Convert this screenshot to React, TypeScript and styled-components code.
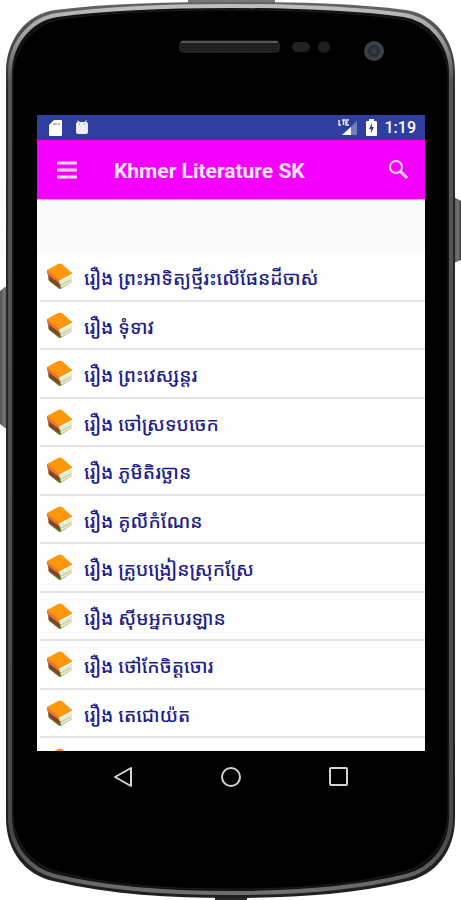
import React from 'react';
import styled, { createGlobalStyle } from 'styled-components';

const GlobalStyle = createGlobalStyle`
  * { box-sizing: border-box; }
  body { margin: 0; background: #fff; font-family: Roboto, "Noto Sans", sans-serif; }
`;

const Phone = styled.main`
  position: relative;
  min-height: 100vh;
  padding: 115px 36px 97px 37px;
  overflow: hidden;
`;

const Shell = styled.svg`
  position: absolute;
  inset: 0;
  width: 100%;
  height: 100%;
`;

const Screen = styled.div`
  position: relative;
  display: flex;
  flex-direction: column;
  background: #fafafa;
`;

const StatusBar = styled.div`
  display: flex;
  align-items: center;
  justify-content: space-between;
  height: 25px;
  padding: 0 9px 0 12px;
  background: #303f9f;
  color: #fff;
`;

const StatusGroup = styled.div<{ $gap: number }>`
  display: flex;
  align-items: center;
  gap: ${(p) => p.$gap}px;
`;

const Clock = styled.time`
  font-size: 16px;
  line-height: 20px;
  font-weight: 500;
`;

const AppBar = styled.header`
  display: flex;
  align-items: center;
  height: 60px;
  padding: 0 16px;
  background: #f500ff;
  border-bottom: 1px solid #d9b3dc;
`;

const Title = styled.h1`
  flex: 1;
  margin: 2px 0 0 34px;
  color: #ffe3ff;
  font-size: 21px;
  line-height: 28px;
  font-weight: 700;
  white-space: nowrap;
`;

const IconButton = styled.button`
  display: flex;
  padding: 0;
  border: 0;
  background: none;
  color: #ffd9ff;
  cursor: pointer;
`;

const Banner = styled.div`
  height: 53px;
`;

const List = styled.ul`
  display: grid;
  grid-template-rows: repeat(10, 1fr) 13px;
  height: 498px;
  margin: 0;
  padding: 0;
  overflow: hidden;
  list-style: none;
  background: #fefefe;
`;

const Item = styled.li`
  min-height: 0;
  margin-left: 3px;
  border-bottom: 2px solid #e4e4e4;

  &:last-child { border-bottom: 0; }
`;

const StoryLink = styled.a`
  display: flex;
  align-items: flex-start;
  gap: 11px;
  padding: 9px 6px 0;
  color: #1c1c8c;
  font-family: "Noto Sans Khmer", "Khmer OS", "Noto Sans", sans-serif;
  font-size: 19px;
  line-height: 32px;
  font-weight: 500;
  text-decoration: none;
  white-space: nowrap;
`;

const Book = styled.svg`
  flex: none;
  width: 27px;
  height: 28px;
`;

const NavBar = styled.nav`
  display: flex;
  align-items: center;
  justify-content: center;
  gap: 82px;
  height: 52px;
  background: #000;

  button { color: #d4d4d4; }
`;

const stories = [
  'រឿង ព្រះអាទិត្យថ្មីរះលើផែនដីចាស់',
  'រឿង ទុំទាវ',
  'រឿង ព្រះវេស្សន្តរ',
  'រឿង ចៅស្រទបចេក',
  'រឿង ភូមិតិរច្ឆាន',
  'រឿង គូលីកំណែន',
  'រឿង គ្រូបង្រៀនស្រុកស្រែ',
  'រឿង ស៊ីមអ្នកបរឡាន',
  'រឿង ថៅកែចិត្តចោរ',
  'រឿង តេជោយ៉ត',
];

const OUTER =
  'M6 72 C6 40 26 14 55 10 C110 3 170 2 230.500 2 C291 2 351 3 406 10 C435 14 455 40 455 72 V818 C455 852 435 875 408 881 C350 895 290 898 230.500 898 C171 898 111 895 53 881 C26 875 6 852 6 818 Z';
const RIM =
  'M10 73 C10 43 31 19 57 15 C110 8 170 6 230.500 6 C291 6 351 8 404 15 C430 19 451 43 451 73 V816 C451 848 431 870 406 876 C350 890 290 893 230.500 893 C171 893 111 890 55 876 C30 870 10 848 10 816 Z';
const FACE =
  'M13 76 C13 48 34 24 60 19 C110 12 170 10 230.500 10 C291 10 351 12 401 19 C427 24 448 48 448 76 V814 C448 844 427 866 403 872 C350 886 290 889 230.500 889 C171 889 111 886 58 872 C34 866 13 844 13 814 Z';

function PhoneShell() {
  return (
    <Shell viewBox="0 0 461 900" preserveAspectRatio="none" aria-hidden="true">
      <defs>
        <linearGradient id="rim" gradientUnits="userSpaceOnUse" x1="0" y1="0" x2="0" y2="900">
          <stop offset="0" stopColor="#c4c4c4" />
          <stop offset=".04" stopColor="#a0a0a0" />
          <stop offset=".09" stopColor="#555" />
          <stop offset=".93" stopColor="#484848" />
          <stop offset="1" stopColor="#747474" />
        </linearGradient>
        <linearGradient id="edge" gradientUnits="userSpaceOnUse" x1="0" y1="0" x2="0" y2="900">
          <stop offset="0" stopColor="#666" />
          <stop offset=".1" stopColor="#2a2a2a" />
          <stop offset="1" stopColor="#202020" />
        </linearGradient>
        <linearGradient id="key" x1="0" y1="0" x2="1" y2="0">
          <stop offset="0" stopColor="#555" />
          <stop offset=".6" stopColor="#777" />
          <stop offset="1" stopColor="#333" />
        </linearGradient>
        <pattern id="mesh" width="3" height="3" patternUnits="userSpaceOnUse">
          <rect width="3" height="3" fill="#1c1c1c" />
          <circle cx="1" cy="1" r=".8" fill="#303030" />
        </pattern>
      </defs>
      <path d="M0 291 L5 287 H8 V428 H5 L0 424 Z" fill="url(#key)" />
      <path d="M454 197 L461 201 V260 L454 263 Z" fill="url(#key)" />
      <path d="M188 0 H275 V5 H188 Z" fill="#777" />
      <path d="M215 896 H247 V900 H215 Z" fill="#292929" />
      <path d={OUTER} fill="url(#edge)" />
      <path d={RIM} fill="#111" stroke="url(#rim)" strokeWidth="4" />
      <path d={FACE} fill="#000" stroke="#1c1c1c" />
      <rect x="180" y="41" width="99" height="11" rx="3" fill="url(#mesh)" stroke="#333" />
      <path d="M182 42 H277" stroke="#555" strokeWidth="2" strokeLinecap="round" />
      <rect x="292" y="42" width="18" height="10" rx="5" fill="#222" />
      <circle cx="324" cy="47" r="6" fill="#202020" />
      <circle cx="374" cy="51" r="10" fill="#3d4046" />
      <circle cx="374" cy="51" r="6" fill="#292d34" />
      <circle cx="374" cy="51" r="3" fill="#363a42" />
    </Shell>
  );
}

function BookIcon() {
  return (
    <Book viewBox="0 0 27 28" aria-hidden="true">
      <path d="M2 16 L14 22 L26 15 V20 L16 26 Q14 28 12 26 L3 19 Z" fill="#6b7d3a" />
      <path d="M14 20 L26 13 V20 L15 26 Z" fill="#e6ecc8" />
      <path d="M15 23 L25 18" stroke="#b9c397" />
      <path d="M1 9 L13 18 L14 26 L3 18 Z" fill="#7c4a1c" />
      <path d="M1 8 L13 17 L13 21 L2 13 Z" fill="#ec6f3c" />
      <path d="M13 17 L26 11 V14 L14 20 Z" fill="#fff4dc" />
      <path d="M1 8 L12 2 Q14 1 16 2 L26 11 L13 18 Z" fill="#ff980b" />
      <path d="M1 8 L13 18 L26 11" fill="none" stroke="#ef8618" />
    </Book>
  );
}

export default function App() {
  return (
    <>
      <GlobalStyle />
      <Phone>
        <PhoneShell />
        <Screen>
          <StatusBar>
            <StatusGroup $gap={12}>
              <svg width="14" height="16" viewBox="0 0 14 16" aria-hidden="true">
                <path d="M5 0 H12 Q13 0 13 1 V15 Q13 16 12 16 H1 Q0 16 0 15 V5 Z" fill="#fff" />
                <path d="M5 3 V5 M7 3 V5 M10 3 V5" stroke="#68729d" />
              </svg>
              <svg width="14" height="16" viewBox="0 0 14 16" aria-hidden="true">
                <path d="M1 4 Q1 2 3 2 L2 0 L5 2 H9 L12 0 L11 2 Q13 2 13 4 V12 Q13 14 11 14 H3 Q1 14 1 12 Z" fill="#eef" />
                <path d="M4 4 H5 M9 4 H10" stroke="#7781b8" />
              </svg>
            </StatusGroup>
            <StatusGroup $gap={8}>
              <svg width="20" height="17" viewBox="0 0 20 17" aria-hidden="true">
                <path d="M4 16 L19 2 V16 Z" fill="#737db9" />
                <path d="M4 16 L13 8 V16 Z" fill="#fff" />
                <path d="M1 1 V6 H3 M4 1 H7 M5.500 1 V6 M11 1 H8 V6 H11 M8 3.500 H10" fill="none" stroke="#e5e8ff" strokeWidth="1.500" />
              </svg>
              <svg width="11" height="17" viewBox="0 0 11 17" aria-hidden="true">
                <path d="M3 0 H8 V2 H10 Q11 2 11 3 V16 Q11 17 10 17 H1 Q0 17 0 16 V3 Q0 2 1 2 H3 Z" fill="#fff" />
                <path d="M6 4 L3 10 H5 V14 L8 8 H6 Z" fill="#303f9f" />
              </svg>
              <Clock>1:19</Clock>
            </StatusGroup>
          </StatusBar>
          <AppBar>
            <IconButton aria-label="Open menu">
              <svg width="27" height="24" viewBox="0 0 27 24" aria-hidden="true">
                <path d="M4 5 H24 M4 12 H24 M4 19 H24" stroke="currentColor" strokeWidth="3" />
              </svg>
            </IconButton>
            <Title>Khmer Literature SK</Title>
            <IconButton aria-label="Search">
              <svg width="22" height="22" viewBox="0 0 22 22" aria-hidden="true">
                <circle cx="9" cy="8" r="6" fill="none" stroke="currentColor" strokeWidth="2" />
                <path d="M13 12 L20 19" stroke="currentColor" strokeWidth="3" />
              </svg>
            </IconButton>
          </AppBar>
          <Banner />
          <List lang="km">
            {stories.map((story) => (
              <Item key={story}>
                <StoryLink href="#">
                  <BookIcon />
                  {story}
                </StoryLink>
              </Item>
            ))}
            <Item>
              <StoryLink href="#" aria-label="Next story">
                <BookIcon />
              </StoryLink>
            </Item>
          </List>
          <NavBar>
            <IconButton aria-label="Back">
              <svg width="26" height="26" viewBox="0 0 26 26" aria-hidden="true">
                <path d="M21 4 V22 L5 13 Z" fill="none" stroke="currentColor" strokeWidth="2" strokeLinejoin="round" />
              </svg>
            </IconButton>
            <IconButton aria-label="Home">
              <svg width="26" height="26" viewBox="0 0 26 26" aria-hidden="true">
                <circle cx="13" cy="13" r="9" fill="none" stroke="currentColor" strokeWidth="2" />
              </svg>
            </IconButton>
            <IconButton aria-label="Recent apps">
              <svg width="26" height="26" viewBox="0 0 26 26" aria-hidden="true">
                <rect x="4" y="4" width="17" height="17" rx="1" fill="none" stroke="currentColor" strokeWidth="2" />
              </svg>
            </IconButton>
          </NavBar>
        </Screen>
      </Phone>
    </>
  );
}
